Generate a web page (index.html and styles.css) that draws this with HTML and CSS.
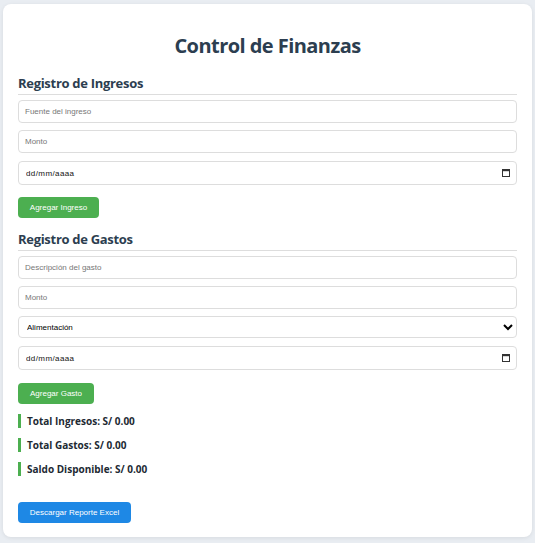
FILE: index.html
```html
<!DOCTYPE html>
<html lang="es">
<head>
<meta charset="utf-8">
<title>Control de Finanzas</title>
<link rel="stylesheet" href="styles.css">
</head>
<body>
<div class="card">
  <h1 class="title">Control de Finanzas</h1>

  <section class="section">
    <h2 class="section-title">Registro de Ingresos</h2>
    <div class="fields">
      <input class="field" type="text" placeholder="Fuente del ingreso">
      <input class="field" type="number" placeholder="Monto">
      <div class="date-wrap">
        <input class="field field-date" type="text" placeholder="dd/mm/aaaa" aria-label="Fecha">
        <svg class="cal-icon" width="8" height="8" viewBox="0 0 8 8" aria-hidden="true">
          <rect x="0.5" y="0.5" width="7" height="7" fill="none" stroke="#333" stroke-width="1"/>
          <rect x="0" y="0" width="8" height="2.2" fill="#333"/>
        </svg>
      </div>
    </div>
    <button class="btn btn-green btn-ingreso">Agregar Ingreso</button>
  </section>

  <section class="section">
    <h2 class="section-title">Registro de Gastos</h2>
    <div class="fields">
      <input class="field" type="text" placeholder="Descripción del gasto">
      <input class="field" type="number" placeholder="Monto">
      <select class="field field-select">
        <option>Alimentación</option>
        <option>Transporte</option>
        <option>Servicios</option>
        <option>Otros</option>
      </select>
      <div class="date-wrap">
        <input class="field field-date" type="text" placeholder="dd/mm/aaaa" aria-label="Fecha">
        <svg class="cal-icon" width="8" height="8" viewBox="0 0 8 8" aria-hidden="true">
          <rect x="0.5" y="0.5" width="7" height="7" fill="none" stroke="#333" stroke-width="1"/>
          <rect x="0" y="0" width="8" height="2.2" fill="#333"/>
        </svg>
      </div>
    </div>
    <button class="btn btn-green btn-gasto">Agregar Gasto</button>
  </section>

  <div class="totals">
    <p class="total">Total Ingresos: S/ 0.00</p>
    <p class="total">Total Gastos: S/ 0.00</p>
    <p class="total">Saldo Disponible: S/ 0.00</p>
  </div>

  <button class="btn btn-blue">Descargar Reporte Excel</button>
</div>
</body>
</html>
```

FILE: styles.css
```css
html, body {
  margin: 0;
  padding: 0;
}
body {
  background: #e9edf2;
  padding: 4px 3px 6px 3px;
  font-family: "Liberation Sans", Arial, sans-serif;
}
.card {
  background: #ffffff;
  border-radius: 8px;
  box-shadow: 0 1px 4px rgba(0,0,0,0.08);
  padding: 28px 15px 15px 15px;
  height: 533px;
  box-sizing: border-box;
}
.title {
  margin: 0 0 14px 0;
  text-align: center;
  font-family: "Open Sans", "Noto Sans", sans-serif;
  font-weight: 700;
  font-size: 20px;
  letter-spacing: -0.55px;
  line-height: 28px;
  color: #2c3e50;
}
.section-title {
  margin: 0 0 5px 0;
  padding-bottom: 2px;
  border-bottom: 1px solid #dddddd;
  font-family: "Open Sans", "Noto Sans", sans-serif;
  font-weight: 700;
  font-size: 13px;
  letter-spacing: -0.3px;
  line-height: 18px;
  color: #2c3e50;
}
.section + .section .section-title {
  margin-top: -1px;
}
.fields {
  display: flex;
  flex-direction: column;
  gap: 7px;
}
.field {
  box-sizing: border-box;
  width: 100%;
  height: 23px;
  margin: 0;
  padding: 0 6px;
  border: 1px solid #dddddd;
  border-radius: 4px;
  background: #ffffff;
  font-family: "Liberation Sans", Arial, sans-serif;
  font-size: 8px;
  color: #111111;
}
.field::placeholder {
  color: #777777;
}
.date-wrap {
  position: relative;
  margin-top: 1px;
}
.field-date {
  display: block;
  height: 24px;
  padding-left: 7px;
  letter-spacing: 0.4px;
}
.field-date::placeholder {
  color: #111111;
}
.cal-icon {
  position: absolute;
  right: 7px;
  top: 8px;
}
.field-select {
  height: 22px;
  padding: 0 6px 0 4px;
  color: #000000;
}
.btn {
  display: block;
  border: none;
  border-radius: 4px;
  color: #ffffff;
  font-family: "Liberation Sans", Arial, sans-serif;
  font-size: 8px;
  height: 21px;
  padding: 0;
  white-space: nowrap;
  text-align: center;
  cursor: pointer;
}
.btn-green {
  background: #4caf50;
  margin-top: 12px;
}
.btn-ingreso {
  width: 81px;
  margin-bottom: 13px;
}
.btn-gasto {
  width: 76px;
  margin-top: 13px;
}
.btn-blue {
  background: #1e88e5;
  width: 113px;
  margin-top: 26px;
}
.totals {
  margin-top: 10px;
  display: flex;
  flex-direction: column;
  gap: 10px;
}
.total {
  margin: 0;
  border-left: 3px solid #4caf50;
  padding-left: 6px;
  font-family: "Open Sans", "Noto Sans", sans-serif;
  font-weight: 700;
  font-size: 10px;
  line-height: 14px;
  color: #222a33;
}
```
